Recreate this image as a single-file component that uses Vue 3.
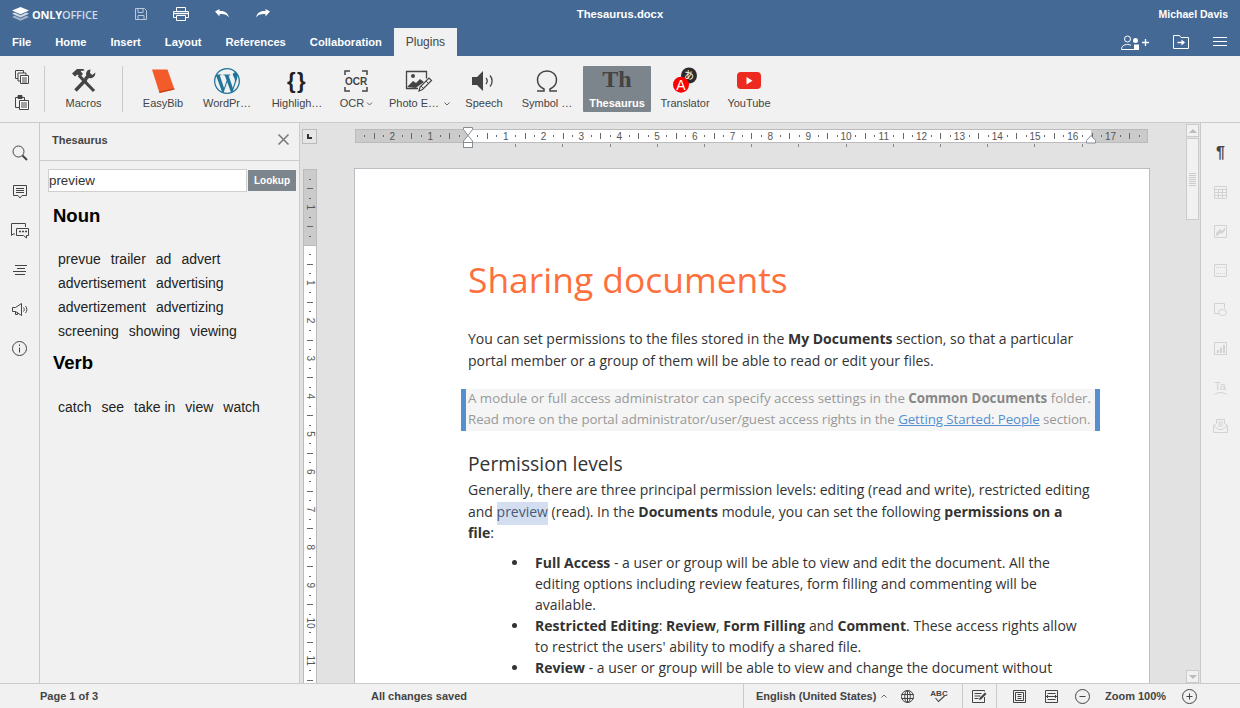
<script setup>
const tabs = ['File', 'Home', 'Insert', 'Layout', 'References', 'Collaboration']

const nouns = [
  ['prevue', 'trailer', 'ad', 'advert'],
  ['advertisement', 'advertising'],
  ['advertizement', 'advertizing'],
  ['screening', 'showing', 'viewing'],
]
const verbs = [['catch', 'see', 'take in', 'view', 'watch']]

const CM = 37.8

// ticks of one ruler, from first cm to last cm, around the origin
function rulerMarks(origin, from, to, max) {
  const marks = []
  for (let cm = from; cm <= to; cm++) {
    const p = origin + cm * CM
    if (cm !== 0 && p > 2 && p < max - 2) marks.push({ p, label: Math.abs(cm) })
    const subs = [[0.25, 'dot'], [0.5, 'long'], [0.75, 'dot']]
    for (const [f, kind] of subs) {
      const q = p + f * CM
      if (q > 2 && q < max - 2) marks.push({ p: q, kind })
    }
  }
  return marks
}

const hMarks = rulerMarks(113, -3, 17, 793)
const vMarks = rulerMarks(77, -3, 13, 520)
const tabStops = Array.from({ length: 13 }, (_, i) => 113 + (i + 1) * 47.2)
</script>

<template>
  <div class="app">
    <header class="header">
      <div class="title-row">
        <div class="logo">
          <svg width="17" height="14" viewBox="0 0 17 14">
            <path d="M8.5 0 17 3.6 8.5 7.2 0 3.6z" fill="#fff" />
            <path d="M2.6 5.6 0 6.8l8.5 3.6L17 6.8l-2.6-1.2-5.9 2.6z" fill="#fff" opacity=".75" />
            <path d="M2.6 8.8 0 10l8.5 3.7L17 10l-2.6-1.2-5.9 2.6z" fill="#fff" opacity=".5" />
          </svg>
          <span class="logo-text"><b>ONLY</b><span>OFFICE</span></span>
        </div>
        <div class="quick">
          <svg class="q-save" width="14" height="14" viewBox="0 0 14 14" fill="none" stroke="#b9c8da">
            <path d="M1.5 1.5h9l2 2v9h-11z" />
            <path d="M4 1.5v4h5v-4M4 12.5v-4h6v4" />
          </svg>
          <svg class="q-print" width="16" height="14" viewBox="0 0 16 14" fill="none" stroke="#fff">
            <path d="M3.5 4V.5h9V4M3.5 10.5h-3V4.5h15v6h-3" />
            <path d="M3.5 8.5h9v5h-9z" />
            <path d="M1 6.5h14" stroke-width="1.4" />
          </svg>
          <svg class="q-undo" width="14" height="10" viewBox="0 0 14 10">
            <path d="M0 2.5 4.5 0v2c5-.6 8.300 1.500 9.500 6.500C12 5.800 9 4.800 4.500 5.200V7.500z" fill="#fff" />
          </svg>
          <svg class="q-redo" width="14" height="10" viewBox="0 0 14 10">
            <path d="M14 2.500 9.500 0v2C4.500 1.400 1.200 3.500 0 8.500 2 5.800 5 4.800 9.500 5.200V7.500z" fill="#fff" />
          </svg>
        </div>
        <div class="doc-title">Thesaurus.docx</div>
        <div class="user">Michael Davis</div>
      </div>
      <div class="tab-row">
        <div v-for="t in tabs" :key="t" class="tab">{{ t }}</div>
        <div class="tab active">Plugins</div>
        <div class="tab-actions">
          <svg class="act-share" width="28" height="15" viewBox="0 0 28 15" fill="none" stroke="#fff">
            <circle cx="6.500" cy="4" r="3" />
            <path d="M.5 14.500c0-3.500 2.500-5 6-5 1.500 0 2.600.3 3.500.8M.5 14.500H13" />
            <circle cx="14.500" cy="5.500" r="2.500" fill="#fff" stroke="none" />
            <path d="M13 9.500h5v5.500h-5z" fill="#fff" stroke="none" />
            <path d="M21 7.500h7M24.500 4v7" stroke-width="1.300" />
          </svg>
          <svg class="act-open" width="16" height="14" viewBox="0 0 16 14" fill="none" stroke="#fff">
            <path d="M.5 13.500V.5h6l1.500 2h7.500v11z" />
            <path d="M4.500 7.500h4.500" stroke-width="1.400" />
            <path d="M8.500 4.500 12 7.500 8.500 10.500z" fill="#fff" stroke="none" />
          </svg>
          <svg class="act-menu" width="14" height="10" viewBox="0 0 14 10" stroke="#fff">
            <path d="M0 .5h14M0 4.500h14M0 8.500h14" />
          </svg>
        </div>
      </div>
    </header>

    <div class="toolbar">
      <div class="clip">
        <svg width="14" height="14" viewBox="0 0 14 14" fill="#f1f1f1" stroke="#444">
          <path d="M.5.5h8v8h-8z" />
          <path d="M3 3h8v8H3z" />
          <path d="M5.500 5.500h8v8h-8z" fill="#fff" />
          <path d="M7 8h5M7 10h5M7 12h5" />
        </svg>
        <svg width="14" height="15" viewBox="0 0 14 15" fill="#f1f1f1" stroke="#444">
          <path d="M.5 2.500h9v10h-9z" />
          <path d="M3 .5h4v3H3z" fill="#444" />
          <path d="M4.500 5.500h9v9h-9z" fill="#fff" />
          <path d="M6 8h6M6 10h6M6 12h6" />
        </svg>
      </div>
      <i class="sep"></i>
      <div class="plugin w-macros">
        <svg class="ico" width="26" height="26" viewBox="0 0 26 26">
          <path d="M4.500 22.500 15 11.500" stroke="#444" stroke-width="3.400" />
          <path d="M1 5.500 6 1h6.500l1 1.500-4 .5 2.500 3-3 3-2.500-2.500-2.500 2z" fill="#444" />
          <path d="M23 23 8 7.500" stroke="#444" stroke-width="3.200" />
          <path d="M19.500 1.500c-3.500 0-5 3-4.200 6L13 10l2.500 2.500 2.500-2.400c3.600.8 6.500-1.500 6.300-5.600L21.300 7 19 5z" fill="#444" />
        </svg>
        <span>Macros</span>
      </div>
      <i class="sep sep-2"></i>
      <div class="plugin w-easy">
        <svg class="ico" width="24" height="26" viewBox="0 0 24 26">
          <path d="M1 1.500h15.500l7 20-15 3.500z" fill="#f35b2b" />
          <path d="M8.500 25l15-3.500-.4-1.200-14.900 3.300z" fill="#c9451c" />
        </svg>
        <span>EasyBib</span>
      </div>
      <div class="plugin w-wp">
        <svg class="ico" width="26" height="26" viewBox="0 0 24 24">
          <path fill="#21759b" d="M21.469 6.825c.84 1.537 1.318 3.3 1.318 5.175 0 3.979-2.156 7.456-5.363 9.325l3.295-9.527c.615-1.54.82-2.771.82-3.864 0-.405-.026-.78-.07-1.11m-7.981.105c.647-.03 1.232-.105 1.232-.105.582-.075.514-.93-.067-.899 0 0-1.755.135-2.88.135-1.064 0-2.85-.15-2.85-.15-.585-.03-.661.855-.075.885 0 0 .54.061 1.125.09l1.68 4.605-2.37 7.08L5.354 6.9c.649-.03 1.234-.1 1.234-.1.585-.075.516-.93-.065-.896 0 0-1.746.138-2.874.138-.2 0-.438-.008-.69-.015C4.911 3.15 8.235 1.215 12 1.215c2.809 0 5.365 1.072 7.286 2.833-.046-.003-.091-.009-.141-.009-1.06 0-1.812.923-1.812 1.914 0 .89.513 1.643 1.06 2.531.411.72.89 1.643.89 2.977 0 .915-.354 1.994-.821 3.479l-1.075 3.585-3.9-11.61.001.014zM12 22.784c-1.059 0-2.081-.153-3.048-.437l3.237-9.406 3.315 9.087c.024.053.05.101.078.149-1.12.393-2.325.609-3.582.609M1.211 12c0-1.564.336-3.05.935-4.39L7.29 21.709C3.694 19.96 1.212 16.271 1.211 12M12 0C5.385 0 0 5.385 0 12s5.385 12 12 12 12-5.385 12-12S18.615 0 12 0" />
        </svg>
        <span>WordPr…</span>
      </div>
      <div class="plugin w-high">
        <svg class="ico" width="30" height="26" viewBox="0 0 30 26">
          <text x="15" y="20" text-anchor="middle" class="braces">{}</text>
        </svg>
        <span>Highligh…</span>
      </div>
      <div class="plugin w-ocr">
        <svg class="ico" width="24" height="26" viewBox="0 0 24 26" fill="none" stroke="#444" stroke-width="1.500">
          <path d="M1 7V3h5M18 3h5v4M1 19v4h5M18 23h5v-4" />
          <text x="12" y="17" text-anchor="middle" class="ocr-text">OCR</text>
        </svg>
        <span>OCR<svg class="chev" width="5" height="4" viewBox="0 0 5 4" fill="none" stroke="#666"><path d="M0 .5 2.500 3 5 .5" /></svg></span>
      </div>
      <div class="plugin w-photo">
        <svg class="ico ico-photo" width="26" height="26" viewBox="0 0 26 26" fill="none" stroke="#444">
          <path d="M13 20.500H1.500V3.500h20v7" stroke-width="1.300" />
          <circle cx="8" cy="8" r="2" fill="#444" stroke="none" />
          <path d="M2 19l6-6 3 2 4-4 4 3-7 5-1 1z" fill="#444" stroke="none" />
          <path d="M14 23l1-4 9-9 2.500 2.500-9 9z" fill="#f1f1f1" stroke-width="1.200" />
          <path d="M16 18l3 3M21 13l3 3" />
        </svg>
        <span class="with-chev">Photo E…<svg class="chev" width="6" height="4" viewBox="0 0 6 4" fill="none" stroke="#666"><path d="M.5.5 3 3 5.500.5" /></svg></span>
      </div>
      <div class="plugin w-speech">
        <svg class="ico" width="26" height="26" viewBox="0 0 26 26" fill="none">
          <path d="M1 9h5l6-6v20l-6-6H1z" fill="#444" />
          <path d="M15 10c1.500 1.800 1.500 4.200 0 6M19 7.500c2.800 3.200 2.800 7.800 0 11" stroke="#444" stroke-width="1.300" />
        </svg>
        <span>Speech</span>
      </div>
      <div class="plugin w-symbol">
        <svg class="ico" width="26" height="26" viewBox="0 0 26 26" fill="none" stroke="#444" stroke-width="1.500">
          <path d="M3 23h7v-2C6 19 3.500 16 3.500 12 3.500 6.500 7.500 3 13 3s9.500 3.500 9.500 9c0 4-2.500 7-6.500 9v2h7" />
        </svg>
        <span>Symbol …</span>
      </div>
      <div class="plugin w-thes active">
        <svg class="ico" width="34" height="26" viewBox="0 0 34 26">
          <text x="17" y="19" text-anchor="middle" class="th">Th</text>
        </svg>
        <span>Thesaurus</span>
      </div>
      <div class="plugin w-trans">
        <svg class="ico" width="28" height="26" viewBox="0 0 28 26">
          <circle cx="18" cy="7.500" r="8" fill="#2b2b2b" />
          <text x="18" y="11" text-anchor="middle" class="kana">あ</text>
          <circle cx="10" cy="16.700" r="8" fill="#f00" />
          <text x="10" y="21.700" text-anchor="middle" class="big-a">A</text>
        </svg>
        <span>Translator</span>
      </div>
      <div class="plugin w-yt">
        <svg class="ico" width="26" height="26" viewBox="0 0 26 26">
          <rect x="1" y="4" width="24" height="17" rx="4" fill="#ec2a1f" />
          <path d="M10.500 9v7.500l6-3.700z" fill="#fff" />
        </svg>
        <span>YouTube</span>
      </div>
    </div>

    <main class="main">
      <nav class="rail">
        <svg width="16" height="16" viewBox="0 0 16 16" fill="none" stroke="#444">
          <circle cx="6.500" cy="6.500" r="5.500" />
          <path d="M10.500 10.500 15 15" stroke-width="2" />
        </svg>
        <svg width="14" height="14" viewBox="0 0 14 14" fill="none" stroke="#444">
          <path d="M.5.5h13v10H9L7 13l-2-2.500H.5z" />
          <path d="M3 3.500h8M3 5.500h8M3 7.500h8" />
        </svg>
        <svg width="19" height="15" viewBox="0 0 19 15" fill="none" stroke="#444">
          <path d="M5 11H3L1.500 12.500V.5h14V4" />
          <path d="M6.500 5.500h12v7h-2V15l-3-2.500h-7z" fill="#f1f1f1" />
          <path d="M9 8.500h2M12 8.500h2M15 8.500h2" stroke-width="1.600" />
        </svg>
        <svg width="14" height="11" viewBox="0 0 14 11" stroke="#444">
          <path d="M2 .5h12M4 3.500h8M0 6.500h13M2 9.500h10" />
        </svg>
        <svg width="16" height="13" viewBox="0 0 16 13" fill="none" stroke="#444">
          <path d="M.5 4.500h3l6-4v12l-6-4h-3zM3.500 8.500v3h2v-2" />
          <path d="M11.500 4.500c1 1.200 1 2.800 0 4M13.500 3c1.800 2 1.800 5 0 7" />
        </svg>
        <svg width="15" height="15" viewBox="0 0 15 15" fill="none" stroke="#444">
          <circle cx="7.500" cy="7.500" r="7" />
          <path d="M7.500 6.500v5M7.500 3.500v1.500" />
        </svg>
      </nav>

      <aside class="panel">
        <div class="panel-head">
          <span>Thesaurus</span>
          <svg width="11" height="11" viewBox="0 0 11 11" stroke="#777" stroke-width="1.500">
            <path d="M.5.5l10 10M10.500.5l-10 10" />
          </svg>
        </div>
        <div class="panel-body">
          <div class="search">
            <div class="search-input">preview</div>
            <div class="search-btn">Lookup</div>
          </div>
          <h2 class="pos">Noun</h2>
          <div class="words">
            <div v-for="(row, i) in nouns" :key="i" class="word-row">
              <span v-for="w in row" :key="w">{{ w }}</span>
            </div>
          </div>
          <h2 class="pos pos-verb">Verb</h2>
          <div class="words">
            <div v-for="(row, i) in verbs" :key="i" class="word-row">
              <span v-for="w in row" :key="w">{{ w }}</span>
            </div>
          </div>
        </div>
      </aside>

      <section class="canvas">
        <div class="canvas-main">
          <div class="ruler-row">
            <div class="corner"><i></i></div>
            <svg class="h-ruler" width="795" height="24" viewBox="0 0 795 24">
              <rect x=".5" y="3.500" width="792" height="13" fill="#cbcbcb" stroke="#bbb" />
              <rect x="113" y="4" width="623" height="12" fill="#fff" />
              <template v-for="(m, i) in hMarks" :key="i">
                <text v-if="m.label" :x="m.p" y="13.500" text-anchor="middle" class="r-num">{{ m.label }}</text>
                <rect v-else-if="m.kind === 'long'" :x="Math.round(m.p)" y="7" width="1" height="6" fill="#666" />
                <rect v-else :x="Math.round(m.p)" y="9" width="1" height="2" fill="#666" />
              </template>
              <rect v-for="s in tabStops" :key="s" :x="Math.round(s)" y="18" width="1" height="3" fill="#888" />
              <path d="M108.500 1.500h9v2L113 9.500l-4.500-6zM113 9.500l4.500 5.500v1.500h-9V15z" fill="#fff" stroke="#858c94" />
              <rect x="108.500" y="16.500" width="9" height="5" fill="#fff" stroke="#858c94" />
              <path d="M736 9.500l4.500 5v2.500h-9v-2.500z" fill="#fff" stroke="#858c94" />
            </svg>
          </div>
          <div class="body-row">
            <svg class="v-ruler" width="14" height="516" viewBox="0 0 14 516">
              <rect x=".5" y="1.500" width="13" height="520" fill="#fff" stroke="#bbb" />
              <rect x=".5" y="1.500" width="13" height="76" fill="#cbcbcb" stroke="#bbb" />
              <template v-for="(m, i) in vMarks" :key="i">
                <text v-if="m.label" x="7" :y="m.p + 3.500" text-anchor="middle" :transform="`rotate(90 7 ${m.p})`" class="r-num">{{ m.label }}</text>
                <rect v-else-if="m.kind === 'long'" x="4" :y="Math.round(m.p)" width="6" height="1" fill="#666" />
                <rect v-else x="6" :y="Math.round(m.p)" width="2" height="1" fill="#666" />
              </template>
            </svg>
            <article class="page">
              <h1>Sharing documents</h1>
              <p class="intro">You can set permissions to the files stored in the <b>My Documents</b> section, so that a particular<br>portal member or a group of them will be able to read or edit your files.</p>
              <blockquote><div class="q-text">A module or full access administrator can specify access settings in the <b>Common Documents</b> folder.<br><span class="line-2">Read more on the portal administrator/user/guest access rights in the <a>Getting Started: People</a> section.</span></div></blockquote>
              <h3>Permission levels</h3>
              <p class="levels">Generally, there are three principal permission levels: editing (read and write), restricted editing<br>and <mark>preview</mark> (read). In the <b>Documents</b> module, you can set the following <b>permissions on a<br>file</b>:</p>
              <ul>
                <li><b>Full Access</b> - a user or group will be able to view and edit the document. All the<br>editing options including review features, form filling and commenting will be<br>available.</li>
                <li><b>Restricted Editing</b>: <b>Review</b>, <b>Form Filling</b> and <b>Comment</b>. These access rights allow<br>to restrict the users' ability to modify a shared file.</li>
                <li><b>Review</b> - a user or group will be able to view and change the document without</li>
              </ul>
            </article>
          </div>
        </div>
        <div class="scroll">
          <div class="sc-btn"><i class="up"></i></div>
          <div class="sc-thumb"><i></i></div>
          <div class="sc-track"></div>
          <div class="sc-btn"><i class="down"></i></div>
        </div>
      </section>

      <nav class="rail-right">
        <span class="pilcrow">¶</span>
        <svg width="13" height="13" viewBox="0 0 13 13" fill="none" stroke="#d2d2d2">
          <path d="M.5.5h12v12H.5zM.5 3.500h12M.5 6.500h12M.5 9.500h12M4.500 3.500v9M8.500 3.500v9" />
        </svg>
        <svg width="13" height="13" viewBox="0 0 13 13" fill="none" stroke="#d2d2d2">
          <path d="M.5.500h12v12H.5z" />
          <path d="M2 10.500 2 8l4-4 2 2 3-3.500v3L8 9l-2-1-2 2.500z" fill="#d2d2d2" stroke="none" />
        </svg>
        <svg width="13" height="13" viewBox="0 0 13 13" fill="none" stroke="#d2d2d2">
          <path d="M.5.500h12v12H.5z" />
          <path d="M2 3.500h9M2 9.500h9" stroke-dasharray="1 1" />
        </svg>
        <svg width="13" height="13" viewBox="0 0 13 13" fill="none" stroke="#d2d2d2">
          <path d="M5 10.500H.5V.5h10v5" />
          <ellipse cx="8.500" cy="9.500" rx="4" ry="3" />
        </svg>
        <svg class="r-chart" width="13" height="13" viewBox="0 0 13 13" fill="none" stroke="#d2d2d2">
          <path d="M.5.500h12v12H.5z" />
          <path d="M3 8h2v3H3zM6 5.500h2V11H6zM9 3h2v8H9z" fill="#d2d2d2" stroke="none" />
        </svg>
        <svg class="r-ta" width="13" height="15" viewBox="0 0 13 15" fill="none" stroke="#d2d2d2">
          <text x="6" y="10" text-anchor="middle" class="ta">Ta</text>
          <path d="M.5 14.500c3-2.500 9-2.500 12 0" />
        </svg>
        <svg width="15" height="14" viewBox="0 0 15 14" fill="none" stroke="#d2d2d2">
          <path d="M.5 13.500V6.500l3-2v-4h8v4l3 2v7zM.5 6.500l5 4M14.500 6.500l-5 4M5.500 10.500h4M5 3h5M5 5h5M5 7h5" />
        </svg>
      </nav>
    </main>

    <footer class="status">
      <span class="st-page">Page 1 of 3</span>
      <span class="st-saved">All changes saved</span>
      <div class="st-right">
        <span class="st-lang">English (United States)<svg width="6" height="4" viewBox="0 0 6 4" fill="none" stroke="#666"><path d="M.5 3.500 3 1l2.500 2.500" /></svg></span>
        <svg class="st-globe" width="13" height="13" viewBox="0 0 13 13" fill="none" stroke="#444">
          <circle cx="6.500" cy="6.500" r="6" />
          <ellipse cx="6.500" cy="6.500" rx="2.800" ry="6" />
          <path d="M.5 4.500h12M.5 8.500h12M6.500.5v12" />
        </svg>
        <svg class="st-abc" width="14" height="13" viewBox="0 0 14 13" fill="none">
          <text x="7" y="6" text-anchor="middle" class="abc">ABC</text>
          <path d="M3.500 8l3 3.500L12.500 6" stroke="#444" stroke-width="1.100" />
        </svg>
        <i class="st-sep s1"></i>
        <svg class="st-track" width="15" height="13" viewBox="0 0 15 13" fill="none" stroke="#444">
          <path d="M12.500 7v5.500H.5V.5h12v1" />
          <path d="M2.500 3.500h7M2.500 6h6M2.500 8.500h4" />
          <path d="M7 10l.5-2L13 2.500l1.500 1.500L9 9.500z" fill="#444" stroke="none" />
        </svg>
        <i class="st-sep s2"></i>
        <svg class="st-fitp" width="13" height="13" viewBox="0 0 13 13" fill="none" stroke="#444">
          <path d="M.5.5h12v12H.5zM2.500 2.500h8v8h-8zM4.500 4.500h4M4.500 6.500h4M4.500 8.500h4" />
        </svg>
        <svg class="st-fitw" width="13" height="13" viewBox="0 0 13 13" fill="none" stroke="#444">
          <path d="M.5.5h12v12H.5zM2.500 3.500h8M2.500 9.500h8M1 6.500h11M3 5l-1.500 1.500L3 8M10 5l1.500 1.500L10 8" />
        </svg>
        <svg class="st-minus" width="15" height="15" viewBox="0 0 15 15" fill="none" stroke="#444">
          <circle cx="7.500" cy="7.500" r="7" />
          <path d="M4.500 7.500h6" />
        </svg>
        <span class="st-zoom">Zoom 100%</span>
        <svg class="st-plus" width="15" height="15" viewBox="0 0 15 15" fill="none" stroke="#444">
          <circle cx="7.500" cy="7.500" r="7" />
          <path d="M4.500 7.500h6M7.500 4.500v6" />
        </svg>
      </div>
    </footer>
  </div>
</template>

<style>
html, body { margin: 0; overflow: hidden; }
</style>

<style scoped>
.app {
  width: 1240px;
  height: 708px;
  display: flex;
  flex-direction: column;
  overflow: hidden;
  font-family: "Liberation Sans", Arial, sans-serif;
  font-size: 11px;
  color: #444;
  background: #f1f1f1;
}
svg { overflow: visible; }

/* header */
.header { height: 56px; background: #446995; color: #fff; flex: none; }
.title-row { height: 28px; display: flex; align-items: center; position: relative; }
.logo { display: flex; align-items: center; margin-left: 12px; width: 100px; gap: 3px; }
.logo-text { font-family: "Open Sans", sans-serif; font-size: 11px; letter-spacing: -0.2px; }
.logo-text b { font-weight: 700; }
.logo-text span { font-weight: 600; color: #cfdae6; }
.quick { display: flex; align-items: center; }
.q-save { margin-left: 22px; }
.q-print { margin-left: 25px; }
.q-undo { margin-left: 26px; }
.q-redo { margin-left: 27px; }
.doc-title { position: absolute; left: 0; right: 0; text-align: center; font-weight: bold; font-size: 11.250px; }
.user { margin-left: auto; margin-right: 12px; font-weight: bold; font-size: 10.500px; }
.tab-row { height: 28px; display: flex; align-items: stretch; }
.tab { padding: 0 12px; line-height: 28px; font-size: 11.200px; font-weight: bold; }
.tab.active { width: 63px; padding: 0; text-align: center; font-size: 12px; font-weight: normal; background: #f1f1f1; color: #444; }
.tab-actions { margin-left: auto; display: flex; align-items: center; }
.act-share { margin-right: 24px; }
.act-open { margin-right: 24px; }
.act-menu { margin-right: 13px; }

/* ribbon */
.toolbar {
  height: 67px;
  box-sizing: border-box;
  border-bottom: 1px solid #cbcbcb;
  display: flex;
  align-items: flex-start;
  flex: none;
  padding-top: 10px;
}
.clip { width: 44px; height: 44px; display: flex; flex-direction: column; align-items: center; justify-content: space-between; padding-top: 4px; box-sizing: border-box; }
.sep { width: 1px; height: 46px; background: #cbcbcb; flex: none; }
.sep-2 { margin-right: 7px; }
.plugin { height: 46px; display: flex; flex-direction: column; align-items: center; flex: none; border-radius: 1px; white-space: nowrap; }
.plugin .ico { height: 26px; flex: none; margin-top: 2px; }
.plugin .ico-photo { margin-left: 8px; }
.plugin span { margin-top: 3px; line-height: 13px; color: #444; }
.w-macros { width: 77px; }
.w-easy { width: 66px; }
.w-wp { width: 62px; }
.w-high { width: 78px; }
.w-ocr { width: 40px; }
.w-photo { width: 76px; }
.w-speech { width: 64px; }
.w-symbol { width: 62px; margin-right: 5px; }
.w-thes { width: 68px; }
.w-trans { width: 68px; }
.w-yt { width: 60px; }
.plugin.active { background: #7d858c; }
.plugin.active span { color: #fff; font-weight: bold; }
.chev { margin-left: 3px; vertical-align: 1px; }
.with-chev { position: relative; }
.with-chev .chev { position: absolute; right: -11px; top: 5px; margin: 0; }
.braces { font-family: "Liberation Sans", sans-serif; font-weight: bold; font-size: 22px; letter-spacing: 1.500px; fill: #222; }
.ocr-text { font-family: "Liberation Sans", sans-serif; font-weight: bold; font-size: 10px; fill: #444; stroke: none; }
.th { font-family: "Liberation Serif", serif; font-weight: bold; font-size: 24px; fill: #444; }
.kana { font-family: "Noto Sans CJK JP", sans-serif; font-size: 10px; fill: #fff; }
.big-a { font-family: "Liberation Sans", sans-serif; font-size: 14px; fill: #fff; }

/* main area */
.main { height: 560px; display: flex; flex: none; }
.rail { width: 39px; border-right: 1px solid #cbcbcb; flex: none; display: flex; flex-direction: column; align-items: center; padding-top: 22px; box-sizing: content-box; }
.rail svg:nth-child(1) { margin-bottom: 24px; }
.rail svg:nth-child(2) { margin-bottom: 24px; }
.rail svg:nth-child(3) { margin-bottom: 27px; }
.rail svg:nth-child(4) { margin-bottom: 27px; }
.rail svg:nth-child(5) { margin-bottom: 25px; }

.panel { width: 259px; border-right: 1px solid #cbcbcb; flex: none; }
.panel-head {
  height: 38px;
  box-sizing: border-box;
  border-bottom: 1px solid #cbcbcb;
  display: flex;
  align-items: center;
  justify-content: space-between;
  padding: 0 10px 4px 12px;
  font-weight: bold;
  font-size: 11px;
}
.panel-body { padding: 8px 3px 0 8px; color: #222; }
.search { display: flex; gap: 1px; }
.search-input {
  width: 199px;
  height: 23px;
  box-sizing: border-box;
  border: 1px solid #cfcfcf;
  background: #fff;
  font-size: 13.330px;
  line-height: 21px;
  color: #333;
}
.search-btn {
  width: 48px;
  height: 21px;
  margin-top: 1px;
  background: #7d858c;
  color: #fff;
  font-weight: bold;
  font-size: 10px;
  line-height: 21px;
  text-align: center;
}
.pos { margin: 13px 0 0 5px; font-size: 18.500px; line-height: 22px; font-weight: bold; color: #000; }
.pos-verb { margin-top: 9px; }
.words { margin: 20px 0 0 10px; font-size: 14px; }
.pos-verb + .words { margin-top: 21px; }
.word-row { height: 24px; line-height: 24px; display: flex; gap: 10px; color: #222; }

.canvas { flex: 1; display: flex; background: #e2e2e2; overflow: hidden; }
.canvas-main { width: 886px; flex: none; overflow: hidden; }
.ruler-row { height: 45px; display: flex; align-items: flex-start; }
.corner { width: 15px; height: 15px; box-sizing: border-box; border: 1px solid #bbb; margin: 6px 0 0 2px; position: relative; background: #e6e6e6; }
.corner i { position: absolute; left: 4px; top: 4px; width: 5px; height: 5px; border-left: 2px solid #333; border-bottom: 2px solid #333; box-sizing: border-box; }
.h-ruler { margin: 3px 0 0 38px; flex: none; }
.body-row { display: flex; align-items: flex-start; height: 515px; overflow: hidden; }
.v-ruler { margin-left: 3px; flex: none; }
.r-num { font-size: 10px; fill: #555; }

.page {
  width: 796px;
  height: 600px;
  margin-left: 37px;
  box-sizing: border-box;
  flex: none;
  background: #fff;
  border: 1px solid #babec3;
  padding: 85px 0 0 113px;
  font-family: "Open Sans", sans-serif;
  font-size: 14px;
  line-height: 21.500px;
  color: #333;
}
.page h1 { margin: 0; font-size: 35.400px; line-height: 50px; font-weight: 400; color: #ff6f3d; }
.page p { margin: 0; white-space: nowrap; }
.page b { font-weight: 700; }
.intro { padding-top: 24px; line-height: 22px; }
.page blockquote {
  display: flow-root;
  margin: 17px 0 0 -7px;
  width: 639px;
  height: 42px;
  box-sizing: border-box;
  padding-left: 2px;
  border-left: 5px solid #568fd0;
  border-right: 5px solid #568fd0;
  background: #f5f5f5;
  color: #999;
  font-size: 13.300px;
  line-height: 21px;
  white-space: nowrap;
}
.q-text { margin-top: -1px; }
.line-2 { letter-spacing: -0.080px; }
.page blockquote b { color: #888; }
.page a { color: #568fd0; text-decoration: underline; }
.page h3 { margin: 19px 0 1px; font-size: 19.250px; line-height: 28px; font-weight: 400; color: #333; }
.levels { line-height: 21.500px; }
.page mark { background: #d3dff1; color: #4a5a78; padding: 0 0 4px; }
.page ul { margin: 8px 0 0; padding: 0 0 0 67px; line-height: 21px; white-space: nowrap; list-style: none; }
.page li { position: relative; }
.page li::before { content: ""; position: absolute; left: -23px; top: 8px; width: 5px; height: 5px; border-radius: 50%; background: #333; }

.scroll { width: 14px; flex: none; padding-top: 1px; display: flex; flex-direction: column; }
.sc-btn { width: 13px; height: 13px; box-sizing: border-box; border: 1px solid #cbcbcb; background: #f1f1f1; display: flex; align-items: center; justify-content: center; flex: none; }
.sc-btn i { width: 0; height: 0; border-left: 4px solid transparent; border-right: 4px solid transparent; }
.sc-btn i.up { border-bottom: 4px solid #bbb; }
.sc-btn i.down { border-top: 4px solid #bbb; }
.sc-thumb { width: 13px; height: 82px; margin-top: 1px; box-sizing: border-box; border: 1px solid #cbcbcb; background: #f1f1f1; flex: none; display: flex; align-items: center; justify-content: center; }
.sc-thumb i { width: 7px; height: 13px; background: repeating-linear-gradient(#cbcbcb 0 1px, transparent 1px 2px); }
.sc-track { flex: 1; }

.rail-right { width: 39px; flex: none; border-left: 1px solid #cbcbcb; display: flex; flex-direction: column; align-items: center; padding-top: 21px; }
.pilcrow { height: 18px; line-height: 18px; font-size: 16px; font-weight: bold; color: #444; margin-bottom: 24px; }
.rail-right svg { margin-bottom: 26px; flex: none; }
.rail-right .r-chart { margin-bottom: 25px; }
.rail-right .r-ta { margin-bottom: 24px; }
.ta { font-family: "Liberation Sans", sans-serif; font-size: 11px; fill: #d2d2d2; stroke: none; }

/* status bar */
.status {
  height: 25px;
  box-sizing: border-box;
  border-top: 1px solid #cbcbcb;
  display: flex;
  align-items: center;
  flex: none;
  font-weight: bold;
  font-size: 11px;
}
.st-page { margin-left: 40px; width: 331px; }
.st-saved { width: 372px; }
.st-right { flex: 1; height: 100%; display: flex; align-items: center; border-left: 1px solid #cbcbcb; }
.st-lang { margin-left: 12px; width: 132px; white-space: nowrap; }
.st-lang svg { margin-left: 5px; vertical-align: 2px; }
.st-globe { margin-left: 13px; }
.st-abc { margin-left: 18px; }
.st-sep { width: 1px; height: 100%; background: #cbcbcb; }
.s1 { margin-left: 16px; }
.st-track { margin-left: 9px; }
.s2 { margin-left: 9px; }
.st-fitp { margin-left: 16px; }
.st-fitw { margin-left: 19px; }
.st-minus { margin-left: 17px; }
.st-zoom { margin-left: 15px; width: 62px; white-space: nowrap; }
.st-plus { margin-left: 15px; }
.abc { font-family: "Liberation Sans", sans-serif; font-size: 8px; fill: #444; }
</style>
